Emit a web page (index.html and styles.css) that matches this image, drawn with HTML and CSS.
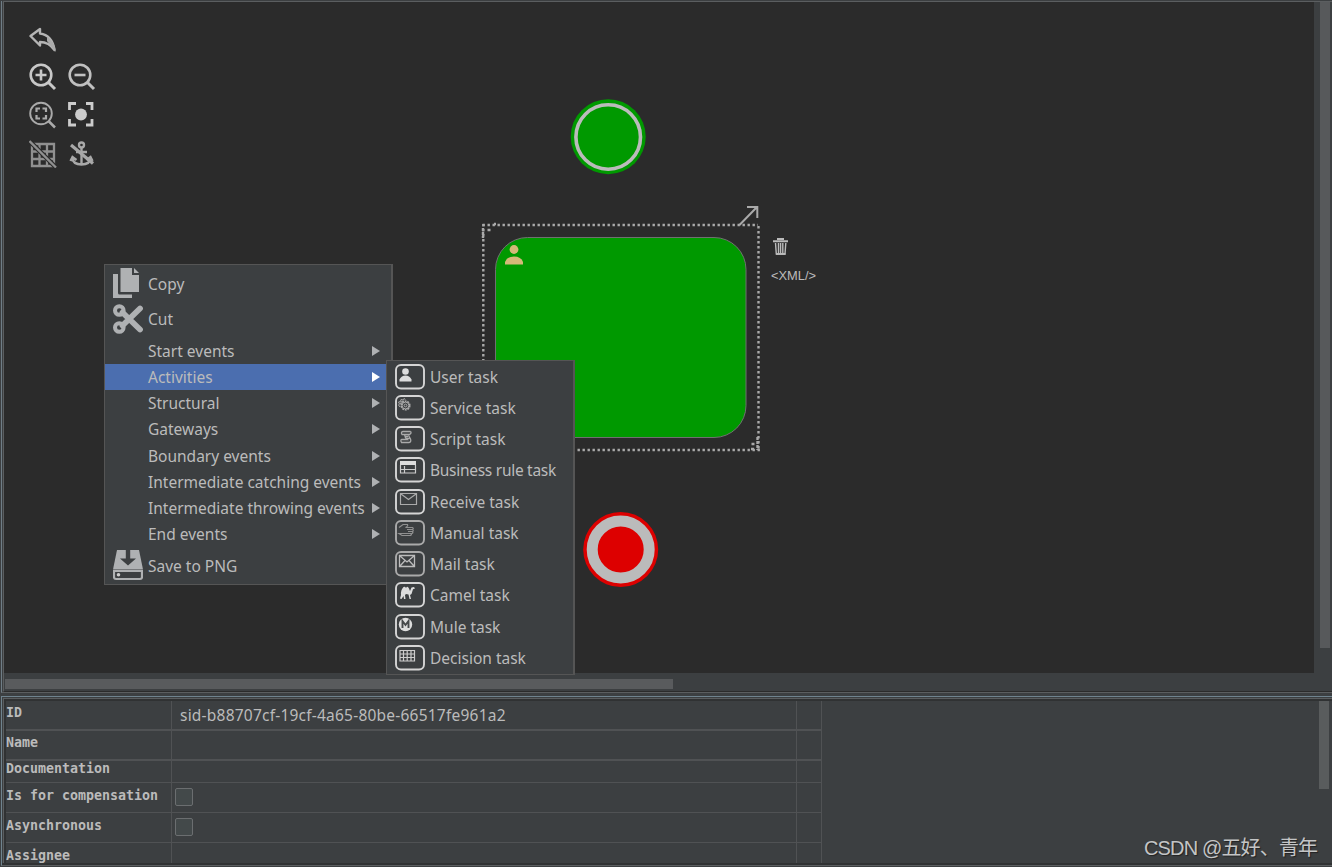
FILE: index.html
```html
<!DOCTYPE html>
<html lang="en">
<head>
<meta charset="utf-8">
<title>Process editor</title>
<link rel="stylesheet" href="styles.css">
</head>
<body>
<main class="app">
  <section class="editor">
    <div class="editor-row">
      <div class="canvas">
        <svg class="diagram" width="1310" height="671" viewBox="4 2 1310 671">
          <circle cx="608.2" cy="136.7" r="37.5" fill="#009900"/>
          <circle cx="608.2" cy="137" r="32.3" fill="none" stroke="#bbb" stroke-width="3.6"/>
          <rect x="495.5" y="237.5" width="250.5" height="200" rx="32" fill="#009900" stroke="#707070"/>
          <g fill="#d4b978"><circle cx="514" cy="249.5" r="4.4"/><path d="M505 264.500v-2.500q2-5.500 9-5.500t9 5.500v2.500z"/></g>
          <g stroke="#aaa" stroke-width="2.400" stroke-dasharray="2.400 2.600" fill="none">
            <path d="M482.500 225H758M483.300 224V450M758.500 226V450M482.500 450H760"/>
          </g>
          <path d="M487.500 230h3M494 224h2M483 228v10M751 449h3M751.500 444h3M757.500 437v13" stroke="#aaa" stroke-width="2.400" stroke-dasharray="3 1" fill="none"/>
          <path d="M739.500 225L757 207M747 207H757.300V218" stroke="#aaa" stroke-width="2" fill="none"/>
          <g fill="none" stroke="#bbb"><path d="M773 241.300h15M778 240v-1h5v1" stroke-width="2"/><path d="M775.500 243l.8 11h8.700l.8-11M778.500 243v11M780.600 243v11M782.800 243v11" stroke-width="1.400"/><path d="M776 254h9.500" stroke-width="1.800"/></g>
          <text x="771" y="280" class="xml-label" textLength="45" lengthAdjust="spacingAndGlyphs">&lt;XML/&gt;</text>
          <circle cx="620.700" cy="549.500" r="37.500" fill="#d00"/>
          <circle cx="620.700" cy="549.500" r="28.500" fill="none" stroke="#bbb" stroke-width="11"/>
        </svg>
        <div class="toolbar">
          <svg class="tool undo" viewBox="0 0 28 26"><path d="M1.500 9L11 2V6.500Q23 8 25.500 23Q20 15 11 15V18.500Z" fill="none" stroke="#b5b5b5" stroke-width="2.400" stroke-linejoin="round"/><path d="M18 10Q27 16 26.500 25L18 14Z" fill="#aaa"/></svg>
          <svg class="tool" viewBox="0 0 28 28"><g fill="none" stroke="#c8c8c8" stroke-width="2.600"><circle cx="12" cy="12" r="10.300"/><path d="M6.500 12h11M12 6.500v11"/><path d="M19.500 19.500l6.500 6.500" stroke-width="3"/></g></svg>
          <svg class="tool" viewBox="0 0 28 28"><g fill="none" stroke="#c0c0c0" stroke-width="2.600"><circle cx="12" cy="12" r="10.300"/><path d="M6.500 12h11"/><path d="M19.500 19.500l6.500 6.500" stroke-width="3"/></g></svg>
          <svg class="tool" viewBox="0 0 28 28"><g fill="none" stroke="#aaa" stroke-width="1.900"><circle cx="12" cy="12.500" r="10.800"/><path d="M19.500 20l6.500 6.500" stroke-width="2.500"/><path d="M7.500 11v-3.500h3.500M13.500 7.500H17v3.500M17 14v3.500h-3.500M11 17.500H7.500V14" stroke-width="2.200"/></g></svg>
          <svg class="tool" viewBox="0 0 28 28"><g fill="none" stroke="#ccc" stroke-width="2.800"><path d="M1.500 9V2.500H8M18 2.500h6V9M24 18v6h-6M8 24H1.500v-6"/></g><circle cx="13" cy="13.500" r="5.900" fill="#ccc"/></svg>
          <svg class="tool" viewBox="0 0 28 28"><g fill="none" stroke="#909090" stroke-width="2.300"><path d="M3 4h22v22H3zM10.500 4v22M18 4v22M3 11.500h22M3 19h22"/><path d="M.500 1L27 27.500" stroke="#2b2b2b" stroke-width="4.500"/><path d="M.500 1L27 27.500"/></g></svg>
          <svg class="tool" viewBox="0 0 28 28"><g fill="none" stroke="#a8a8a8" stroke-width="2.400"><circle cx="13.500" cy="5" r="2.500"/><path d="M13.500 7.500v17M8 12h11M4 17.500q1 7 9.500 7T23 17.500M2.500 21l2-4 4 3M18.500 20l4-3 2 4"/><path d="M3 5L25 23.500" stroke-width="3.200"/></g></svg>
        </div>
      </div>
      <div class="scroll-y"><div class="thumb-y"></div></div>
    </div>
    <div class="scroll-x"><div class="thumb-x"></div></div>
  </section>

  <section class="properties">
    <div class="prop-table">
      <div class="row"><div class="name">ID</div><div class="value id-value">sid-b88707cf-19cf-4a65-80be-66517fe961a2</div><div class="more"></div></div>
      <div class="row"><div class="name">Name</div><div class="value"></div><div class="more"></div></div>
      <div class="row short"><div class="name">Documentation</div><div class="value"></div><div class="more"></div></div>
      <div class="row thin"><div class="name">Is for compensation</div><div class="value"><span class="check"></span></div><div class="more"></div></div>
      <div class="row thin"><div class="name">Asynchronous</div><div class="value"><span class="check"></span></div><div class="more"></div></div>
      <div class="row last"><div class="name">Assignee</div><div class="value"></div><div class="more"></div></div>
    </div>
    <div class="prop-scroll"><div class="prop-thumb"></div></div>
  </section>

  <nav class="menu">
    <div class="item tall copy"><svg class="menu-icon" viewBox="0 0 30 32"><path d="M0 6h5v19q0 1.500 1.500 1.500H19V30H0z" fill="#afb1b3"/><path d="M7.500 0H19v7h7v17H7.500z" fill="#afb1b3"/><path d="M21 0l5 5h-5z" fill="#afb1b3"/></svg><span>Copy</span></div>
    <div class="item tall cut"><svg class="menu-icon" viewBox="0 0 30 32"><g fill="none" stroke="#afb1b3"><circle cx="6.300" cy="7.500" r="4.300" stroke-width="4"/><circle cx="6.300" cy="24.500" r="4.300" stroke-width="4"/><path d="M9.500 9.500L27 26.500M9.500 22.500L27 5.500" stroke-width="5.800" stroke-linecap="round"/></g></svg><span>Cut</span></div>
    <div class="item"><span>Start events</span><i class="arrow"></i></div>
    <div class="item active"><span>Activities</span><i class="arrow"></i></div>
    <div class="item"><span>Structural</span><i class="arrow"></i></div>
    <div class="item"><span>Gateways</span><i class="arrow"></i></div>
    <div class="item"><span>Boundary events</span><i class="arrow"></i></div>
    <div class="item"><span>Intermediate catching events</span><i class="arrow"></i></div>
    <div class="item"><span>Intermediate throwing events</span><i class="arrow"></i></div>
    <div class="item"><span>End events</span><i class="arrow"></i></div>
    <div class="item tall save"><svg class="menu-icon" viewBox="0 0 30 32"><path d="M4 0h22l4 19.500H0z" fill="#afb1b3"/><path d="M12.800 0h4.400v8.500H23L15 15.500 7 8.500h5.800z" fill="#3c3f41"/><path d="M1 21h28v6q0 2-2 2H3q-2 0-2-2z" fill="none" stroke="#afb1b3" stroke-width="2.200"/><circle cx="5.500" cy="24.800" r="1.800" fill="#ccc"/></svg><span>Save to PNG</span></div>
  </nav>

  <nav class="submenu">
    <div class="task"><svg class="task-icon" viewBox="0 0 30 26"><rect class="frame" x="1" y="1" width="28" height="23.500" rx="5"/><circle cx="10.500" cy="7.500" r="3.300" fill="#ddd"/><path d="M4.500 17.500v-2q2-4 6-4t6 4v2z" fill="#ddd"/></svg><span>User task</span></div>
    <div class="task"><svg class="task-icon" viewBox="0 0 30 26"><rect class="frame" x="1" y="1" width="28" height="23.500" rx="5"/><g fill="none" stroke="#aaa"><circle cx="10.500" cy="10.500" r="4.300" stroke-width="1.600" stroke-dasharray="1.900 .8"/><circle cx="10.500" cy="10.500" r="3.400"/><circle cx="10.500" cy="10.500" r="1.400"/><path d="M5 12l-1.500-2 1-1-1-2 2-.5.500-2 2 .5 1-1.500 1.500 1.200M5.500 9l1-2.500L9 6"/></g></svg><span>Service task</span></div>
    <div class="task"><svg class="task-icon" viewBox="0 0 30 26"><rect class="frame" x="1" y="1" width="28" height="23.500" rx="5"/><path d="M15.500 5.500H8Q5.500 6 7 8.500h2.500Q10 12 12 13.500H7q-2 0-.5 3H14q2.500-.5 1.500-3.500L13.500 9.500M15.500 5.500q1.500 1.500-1 3h-5M10.500 10.500h2.500M11.500 12.500h3" fill="none" stroke="#aaa" stroke-width="1.300"/></svg><span>Script task</span></div>
    <div class="task tight"><svg class="task-icon" viewBox="0 0 30 26"><rect class="frame" x="1" y="1" width="28" height="23.500" rx="5"/><path d="M5 4h16v4H5z" fill="#ddd"/><path d="M5.500 8v8h15V8M5 12.500h16M9.500 9v7" fill="none" stroke="#ccc" stroke-width="1.200"/></svg><span>Business rule task</span></div>
    <div class="task"><svg class="task-icon" viewBox="0 0 30 26"><rect class="frame" x="1" y="1" width="28" height="23.500" rx="5"/><path d="M5.500 4.500h16v11h-16zM6 5l7.500 5.500L21 5" fill="none" stroke="#aaa" stroke-width="1.200"/></svg><span>Receive task</span></div>
    <div class="task"><svg class="task-icon dim" viewBox="0 0 30 26"><rect class="frame" x="1" y="1" width="28" height="23.500" rx="5"/><path d="M4 7.500L8 4.500h4.500q1 1.500-2 3h7q1.500 1 0 2H12M17.500 9.500q1.500 1 0 2H13M17.500 11.500q1 1-.5 2h-4M16 13.500q1 1-.5 2H7L4 13.500z" fill="none" stroke="#909090" stroke-width="1.200"/></svg><span>Manual task</span></div>
    <div class="task"><svg class="task-icon dim" viewBox="0 0 30 26"><rect class="frame" x="1" y="1" width="28" height="23.500" rx="5"/><path d="M4.500 4.500h15v11h-15zM5 5l7 6 7-6M5 15l5-5.500M19 15l-5-5.500" fill="none" stroke="#bbb" stroke-width="1.300"/></svg><span>Mail task</span></div>
    <div class="task"><svg class="task-icon" viewBox="0 0 30 26"><rect class="frame" x="1" y="1" width="28" height="23.500" rx="5"/><path d="M5 16.500l1-3.500q-.5-5 2.500-8 1.500-1 2.500 1 1.500-2.500 3 .5l1 2.500 1.500-3.500 2.500-.5 1 1.500-2 .8-1.500 4.700-1.500 1L16 17h-1.500l-1-4.500-2.500-.5-1 1 .5 4H9l-.5-3L6.500 17z" fill="#ddd"/></svg><span>Camel task</span></div>
    <div class="task"><svg class="task-icon" viewBox="0 0 30 26"><rect class="frame" x="1" y="1" width="28" height="23.500" rx="5"/><circle cx="10.500" cy="10.500" r="6.700" fill="#ddd"/><path d="M7.500 14V7l3 4 3-4v7" fill="none" stroke="#45484a" stroke-width="1.900"/></svg><span>Mule task</span></div>
    <div class="task"><svg class="task-icon" viewBox="0 0 30 26"><rect class="frame" x="1" y="1" width="28" height="23.500" rx="5"/><path d="M5 5.500h14.500v10.500H5zM5 9h14.500M5 12.500h14.500M8.500 5v11M12.200 5v11M16 5v11" fill="none" stroke="#ccc" stroke-width="1.200"/></svg><span>Decision task</span></div>
  </nav>

  <div class="watermark">CSDN @五好、青年</div>
</main>
</body>
</html>
```
FILE: styles.css
```css
* { box-sizing: border-box; }
body { margin: 0; background: #3c3f41; color: #bbb; font: 15.5px "Noto Sans", sans-serif; overflow: hidden; }
.app { position: relative; width: 1332px; height: 867px; display: flex; flex-direction: column; gap: 3px; padding: 1px 0 0 1px; }

.editor { height: 692px; border-left: 1px solid #6f7d86; border-bottom: 1px solid #5b5e60; padding-left: 1px; display: flex; flex-direction: column; }
.editor-row { height: 672px; display: flex; border-left: 1px solid #5b5e60; border-top: 1px solid #5b5e60; }
.canvas { position: relative; width: 1310px; background: #2b2b2b; overflow: hidden; }
.diagram { display: block; }
.xml-label { font: 13px "Liberation Sans", sans-serif; fill: #bbb; }
.scroll-y { flex: 1; padding-left: 6px; }
.thumb-y { width: 10px; height: 646px; background: #57595b; }
.scroll-x { flex: 1; padding: 6px 0 0 1px; border-left: 1px solid #5b5e60; border-bottom: 1px solid #2b2b2b; }
.thumb-x { width: 668px; height: 10px; background: #595b5d; }

.toolbar { position: absolute; left: 25px; top: 25px; display: grid; grid-template-columns: 28px 28px; column-gap: 11px; row-gap: 10.200px; }
.tool { width: 28px; height: 28px; display: block; }
.undo { grid-column: 1 / 3; height: 26px; }

.properties { height: 170px; display: flex; border-top: 1px solid #6f838e; border-left: 1px solid #6f838e; border-bottom: 1px solid #5b5e60; padding: 1px 0 0 1px; background: linear-gradient(#303233, #303233) 0 166px / 100% 2px no-repeat; }
.prop-table { width: 819px; border-left: 1px solid #5b5e60; border-top: 1px solid #5b5e60; padding: 2px 0 0 2px; box-shadow: inset 2px 2px #303233; height: 165px; overflow: hidden; }
.prop-scroll { flex: 1; height: 165px; border-top: 1px solid #5b5e60; box-shadow: inset 0 2px #303233; display: flex; justify-content: flex-end; padding: 2px 3px 0 0; }
.prop-thumb { width: 10px; height: 88px; background: #595c5d; }
.row { display: grid; grid-template-columns: 166px 625px 25px; height: 30px; border-bottom: 2px solid #505254; }
.row.short { height: 22px; border-bottom-width: 1px; }
.row.thin { border-bottom-width: 1px; }
.row.last { border: 0; height: 20px; }
.row > div { border-right: 1px solid #505254; }
.name { padding-top: 4px; font: bold 13.300px/16px "DejaVu Sans Mono", monospace; white-space: pre; }
.short .name { padding-top: 0; }
.thin .name, .last .name { padding-top: 5px; }
.value { padding: 0 0 0 8px; line-height: 28px; overflow: hidden; }
.id-value { letter-spacing: .22px; }
.check { display: block; width: 18px; height: 18px; margin: 5px 0 0 -5px; border: 1px solid #6b6e70; border-radius: 2px; background: #43494a; }

.menu, .submenu { position: absolute; background: #3c3f41; border: 1px solid #555; white-space: nowrap; }
.menu { left: 104px; top: 264px; width: 289px; height: 321px; border-right-width: 2px; }
.item { height: 26.150px; padding-left: 43px; display: flex; align-items: center; line-height: 26px; }
.item.tall { height: 36.500px; padding-left: 8px; gap: 5px; }
.item.copy, .item.save { padding-top: 2px; }
.item.cut { padding-bottom: 2px; }
.menu-icon { width: 30px; height: 32px; flex: none; }
.item.active { background: #4b6eaf; }
.arrow { margin-left: auto; margin-right: 11px; border-left: 8px solid #afb1b3; border-top: 5px solid transparent; border-bottom: 5px solid transparent; }
.active .arrow { border-left-color: #fff; }
.submenu { left: 386px; top: 360px; width: 189px; height: 315px; border-right-width: 2px; }
.task { height: 31.250px; display: flex; align-items: center; gap: 5px; padding-left: 8px; }
.task.tight span { letter-spacing: -.28px; }
.task-icon { width: 30px; height: 26px; flex: none; }
.frame { fill: none; stroke: #d5d5d5; stroke-width: 1.900; }
.dim .frame { stroke: #aaa; }
.watermark { position: absolute; left: 1144px; top: 834px; font: 20px/28px "Liberation Sans", "Noto Sans CJK SC", sans-serif; letter-spacing: -.85px; color: #c4c5c6; text-shadow: 1px 1px 1px #222; white-space: nowrap; }
```
